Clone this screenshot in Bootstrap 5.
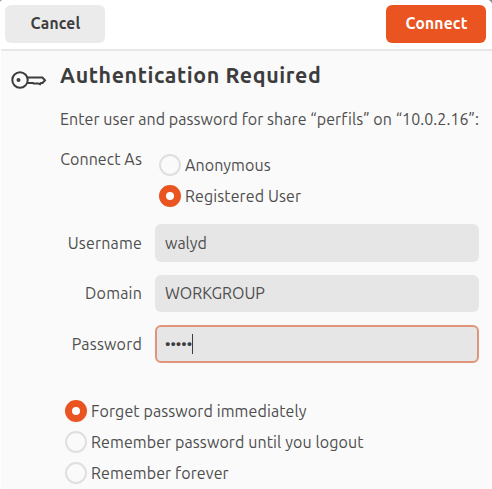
<!DOCTYPE html>
<html lang="en">
<head>
<meta charset="utf-8">
<meta name="viewport" content="width=device-width, initial-scale=1">
<title>Authentication Required</title>
<link href="https://cdn.jsdelivr.net/npm/bootstrap@5.3.0/dist/css/bootstrap.min.css" rel="stylesheet">
<style>
  html, body { height: 100%; overflow: hidden; }
  body { font-family: Ubuntu, "Noto Sans", sans-serif; font-size: 16px; letter-spacing: .06px; line-height: 22px; color: #4e4e4e; background: #8c8c8c; }
  .dialog { height: 489px; background: #fafafa; border-left: 1px solid #fff; border-radius: 3px 5px 0 0; overflow: hidden; }
  .headerbar { height: 51px; padding: 5px 6px 0 4px; background: #fff; border-bottom: 2px solid #e7e7e7; }
  .headerbar .btn { width: 100px; height: 38px; padding: 0 0 0 1px; border: 0; border-radius: 6px; font-size: 15.6px; letter-spacing: .2px; font-weight: 600; }
  .btn-cancel, .btn-cancel:hover { background: #ebebeb; color: #3d3d3d; }
  .btn-connect, .btn-connect:hover { background: #e95420; color: #fff; }
  .key-col { width: 59px; padding: 18px 0 0 10px; }
  .content { width: 419px; }
  .title { font-size: 21.4px; letter-spacing: .6px; line-height: 28px; font-weight: 600; color: #3d3d3d; margin: 10px 0 0; }
  .message { margin: 19px 0 0; }
  .field-label { width: 82px; }
  .form-row .field-label { letter-spacing: .2px; }
  .connect-as { gap: 17px; margin: 18px 0 8px; }
  .connect-as .options { padding-top: 6px; letter-spacing: .1px; }
  .form-row { margin-bottom: 13px; }
  .form-row .form-control { width: 324px; height: 37.5px; padding: 0 10px; font: inherit; color: #4e4e4e; background: #e6e6e6; border: 0; border-radius: 6px; }
  .form-row .focused { border: 2px solid #e0957a; padding: 0 8px; }
  .caret { width: 1px; height: 20px; background: #3d3d3d; }
  .dots { font-size: 15px; letter-spacing: 0; font-weight: 500; color: #3d3d3d; }
  .remember { padding: 24px 0 0 5px; letter-spacing: .1px; }
  .option { height: 22px; gap: 4px; margin-bottom: 9px; }
  .option .form-check-input { width: 22px; height: 22px; margin: 0; border: 2px solid #dfdfdf; background-color: #fafafa; flex: none; box-shadow: none; }
  .option .form-check-input:checked { border: 7px solid #e95420; background: #fff; }
</style>
</head>
<body>
<main class="dialog">
  <header class="headerbar d-flex justify-content-between">
    <button class="btn btn-cancel" type="button">Cancel</button>
    <button class="btn btn-connect" type="button">Connect</button>
  </header>
  <form class="d-flex">
    <div class="key-col">
      <svg width="36" height="22" viewBox="0 0 36 22" fill="none" stroke="#3d3d3d" stroke-width="2" class="d-block" aria-hidden="true">
        <circle cx="9" cy="11" r="7.7"/>
        <circle cx="7.5" cy="11" r="2" fill="#3d3d3d" stroke="none"/>
        <path d="M16.5 8.5H31.4L34 11.2L31.5 14H30L29 15.2L27.5 14.5H22.5L22 14H16.2"/>
      </svg>
    </div>
    <div class="content">
      <h1 class="title text-nowrap">Authentication Required</h1>
      <p class="message text-nowrap">Enter user and password for share “perfils” on “10.0.2.16”:</p>
      <div class="connect-as d-flex">
        <div class="field-label text-end text-nowrap">Connect As</div>
        <div class="options">
          <label class="option d-flex align-items-center"><input class="form-check-input" type="radio" name="as">Anonymous</label>
          <label class="option d-flex align-items-center"><input class="form-check-input" type="radio" name="as" checked>Registered User</label>
        </div>
      </div>
      <div class="form-row d-flex align-items-center justify-content-between">
        <label class="field-label text-end" for="user">Username</label>
        <input class="form-control" id="user" type="text" value="walyd">
      </div>
      <div class="form-row d-flex align-items-center justify-content-between">
        <label class="field-label text-end" for="domain">Domain</label>
        <input class="form-control" id="domain" type="text" value="WORKGROUP">
      </div>
      <div class="form-row d-flex align-items-center justify-content-between">
        <span class="field-label text-end">Password</span>
        <div class="form-control focused d-flex align-items-center"><span class="dots">•••••</span><span class="caret"></span></div>
      </div>
      <div class="remember">
        <label class="option d-flex align-items-center"><input class="form-check-input" type="radio" name="keep" checked>Forget password immediately</label>
        <label class="option d-flex align-items-center"><input class="form-check-input" type="radio" name="keep">Remember password until you logout</label>
        <label class="option d-flex align-items-center"><input class="form-check-input" type="radio" name="keep">Remember forever</label>
      </div>
    </div>
  </form>
</main>
<script src="https://cdn.jsdelivr.net/npm/bootstrap@5.3.0/dist/js/bootstrap.bundle.min.js"></script>
</body>
</html>
